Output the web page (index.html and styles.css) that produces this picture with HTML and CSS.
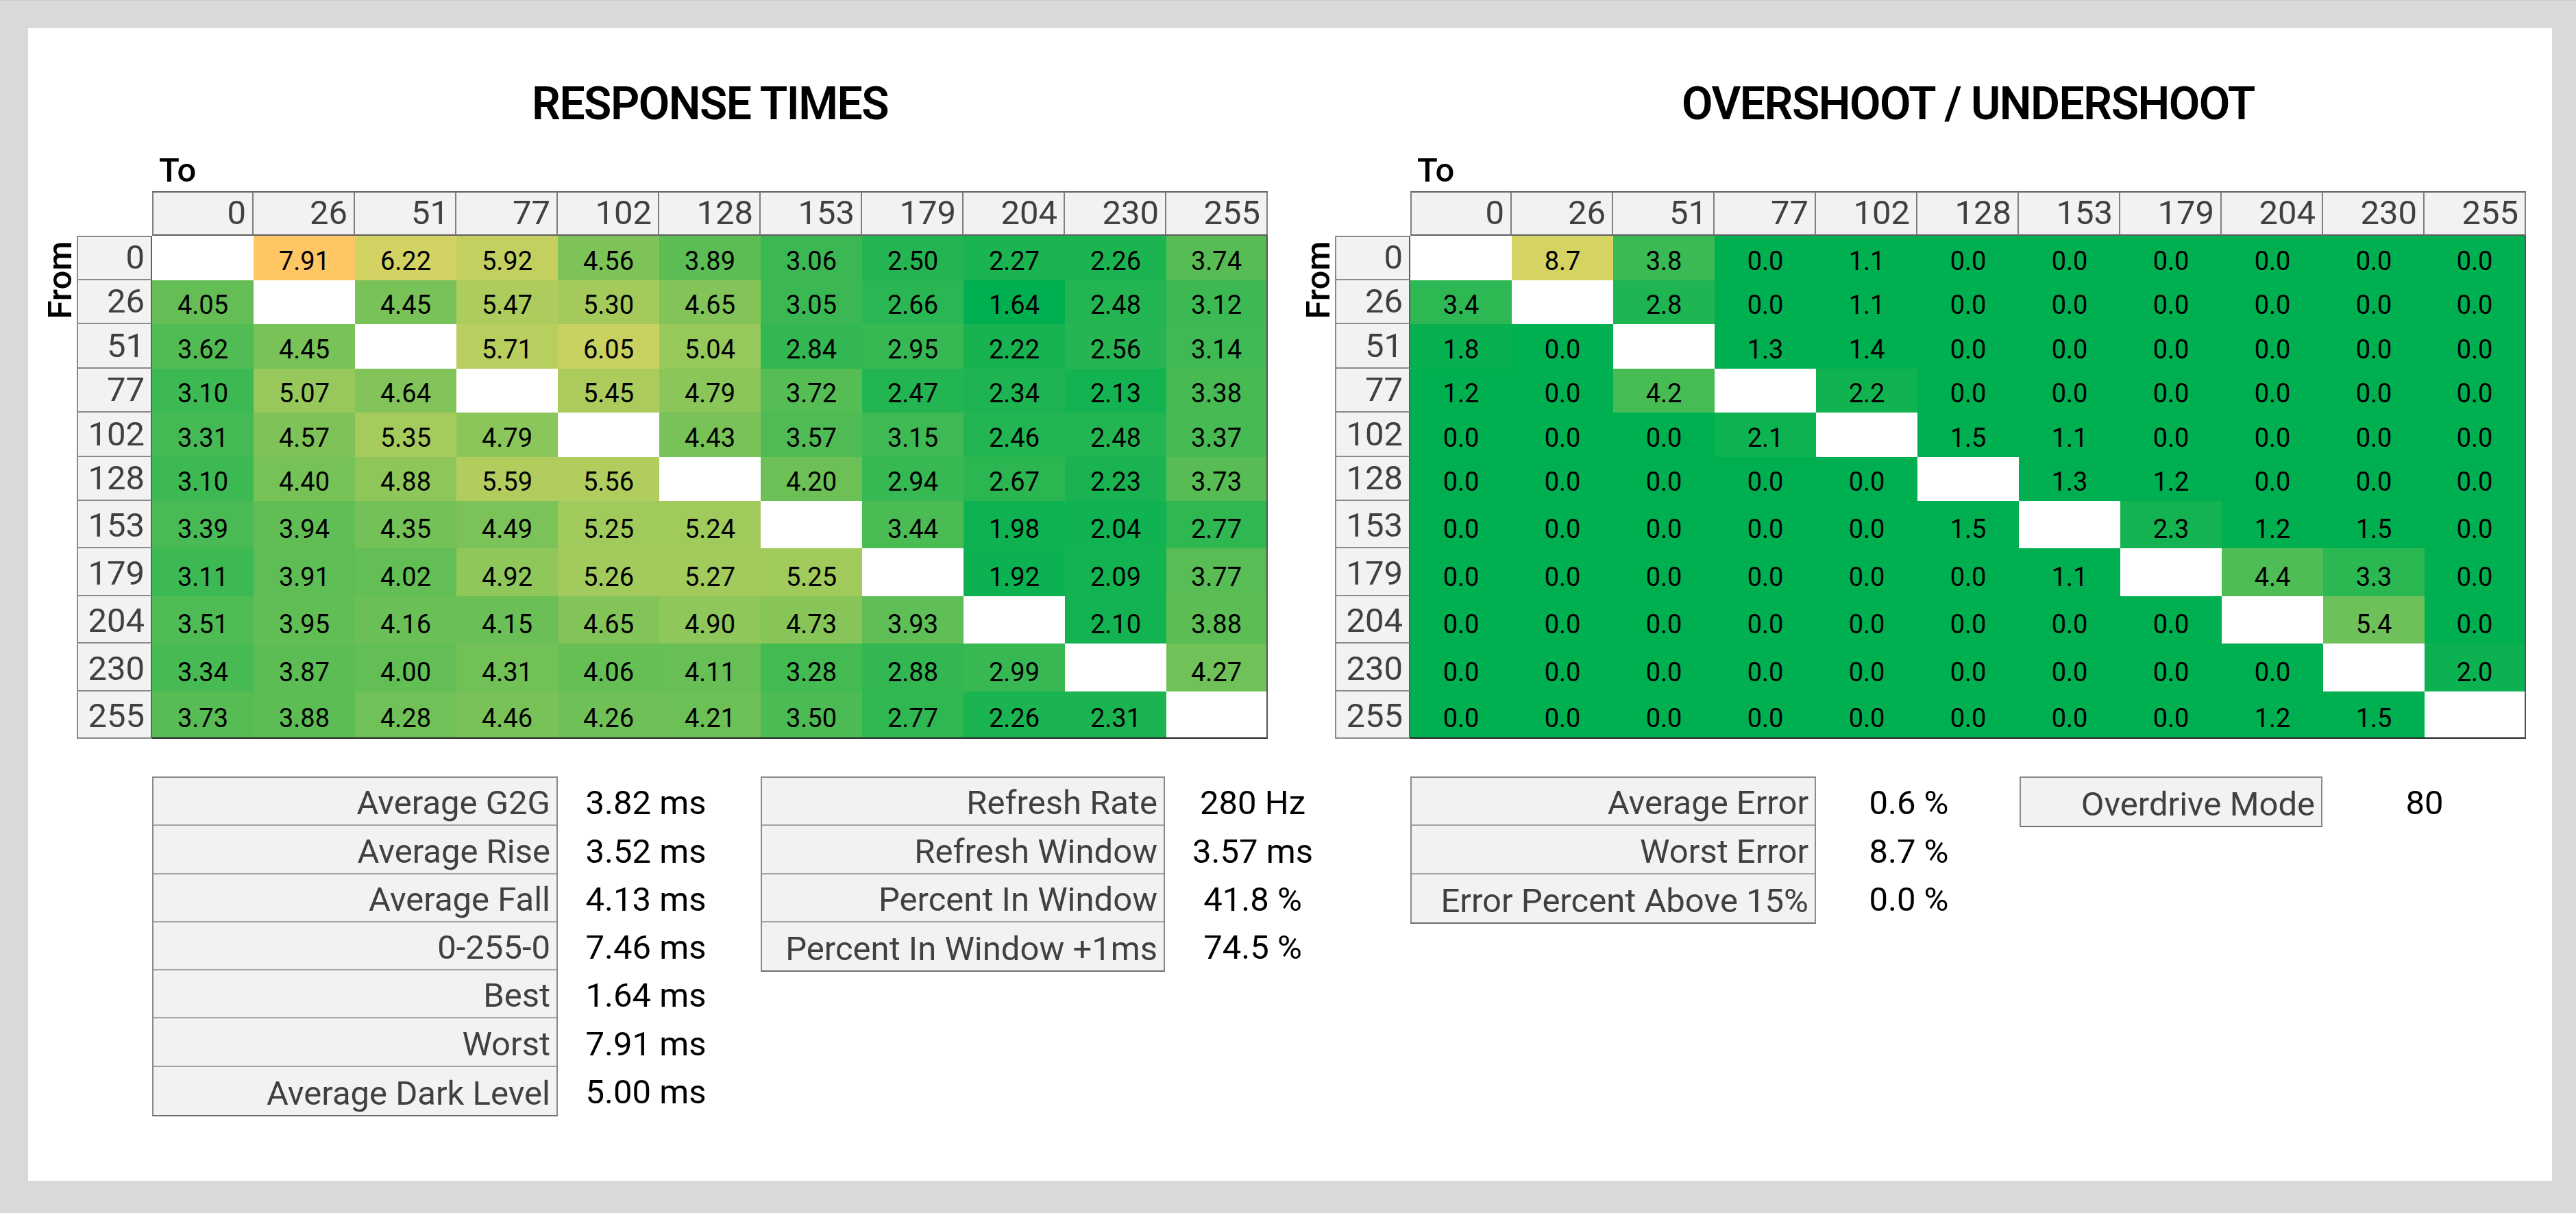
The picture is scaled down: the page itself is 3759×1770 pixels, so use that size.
FILE: index.html
```html
<!DOCTYPE html>
<html lang="en">
<head>
<meta charset="utf-8">
<title>Response Times / Overshoot</title>
<link rel="stylesheet" href="styles.css">
</head>
<body>
<main class="panel">
  <section class="chart">
    <h1 class="title">RESPONSE TIMES</h1>
    <div class="to">To</div>
    <div class="matrix-wrap">
      <div class="from"><span>From</span></div>
      <div class="matrix" id="rt-matrix"></div>
    </div>
    <div class="stats stats--rt">
      <div class="labels labels--a">
        <div class="lab">Average G2G</div>
        <div class="lab">Average Rise</div>
        <div class="lab">Average Fall</div>
        <div class="lab">0-255-0</div>
        <div class="lab">Best</div>
        <div class="lab">Worst</div>
        <div class="lab">Average Dark Level</div>
      </div>
      <div class="values values--a">
        <div class="val">3.82 ms</div>
        <div class="val">3.52 ms</div>
        <div class="val">4.13 ms</div>
        <div class="val">7.46 ms</div>
        <div class="val">1.64 ms</div>
        <div class="val">7.91 ms</div>
        <div class="val">5.00 ms</div>
      </div>
      <div class="labels labels--b">
        <div class="lab">Refresh Rate</div>
        <div class="lab">Refresh Window</div>
        <div class="lab">Percent In Window</div>
        <div class="lab">Percent In Window +1ms</div>
      </div>
      <div class="values values--b">
        <div class="val">280 Hz</div>
        <div class="val">3.57 ms</div>
        <div class="val">41.8 %</div>
        <div class="val">74.5 %</div>
      </div>
    </div>
  </section>

  <section class="chart">
    <h1 class="title">OVERSHOOT / UNDERSHOOT</h1>
    <div class="to">To</div>
    <div class="matrix-wrap">
      <div class="from"><span>From</span></div>
      <div class="matrix" id="os-matrix"></div>
    </div>
    <div class="stats stats--os">
      <div class="labels labels--a">
        <div class="lab">Average Error</div>
        <div class="lab">Worst Error</div>
        <div class="lab">Error Percent Above 15%</div>
      </div>
      <div class="values values--c">
        <div class="val">0.6 %</div>
        <div class="val">8.7 %</div>
        <div class="val">0.0 %</div>
      </div>
      <div class="labels labels--d">
        <div class="lab">Overdrive Mode</div>
      </div>
      <div class="values values--d">
        <div class="val">80</div>
      </div>
    </div>
  </section>
</main>
<script src="script.js"></script>
</body>
</html>
```

FILE: styles.css
```css
* { box-sizing: border-box; }

html, body {
  margin: 0;
  padding: 0;
}

body {
  background: #d9d9d9;
  border-top: 1px solid #c6cfd8;
  font-family: "Roboto", "Liberation Sans", sans-serif;
  color: #000;
}

.panel {
  margin: 40px 35px 0 41px;
  height: 1682px;
  background: #ffffff;
  padding: 78px 0 0 21px;
  display: flex;
  gap: 48px;
}

.chart {
  width: 1788px;
  flex-shrink: 0;
}

.title {
  margin: 0 0 0 160px;
  width: 1628px;
  text-align: center;
  font-weight: 600;
  font-size: 66px;
  line-height: 66px;
  letter-spacing: -1.5px;
  color: #000;
}

.to {
  margin: 39px 0 0 170px;
  font-weight: 500;
  font-size: 49px;
  line-height: 49px;
  color: #000;
}

.matrix-wrap {
  display: flex;
  margin-top: 6px;
}

.from {
  width: 50px;
  height: 259px;
  flex-shrink: 0;
  display: flex;
  align-items: center;
  justify-content: center;
}

.from span {
  writing-mode: vertical-rl;
  transform: rotate(180deg);
  font-weight: 500;
  font-size: 49px;
  line-height: 49px;
  color: #000;
}

.matrix {
  display: grid;
  grid-template-columns: 110px repeat(11, 148px);
  grid-template-rows: 65px repeat(6, 64.5px) repeat(5, 69.4px);
}

.corner { background: transparent; }

.hcell,
.rcell {
  background: #f2f2f2;
  color: #404040;
  font-size: 49px;
  line-height: 49px;
  display: flex;
  align-items: flex-end;
  justify-content: flex-end;
  padding: 0 9px 7px 0;
}

.hcell {
  border-top: 2px solid #5f5f5f;
  border-right: 2px solid #7f7f7f;
  border-bottom: 2px solid #5f5f5f;
}

.hcell--first { border-left: 2px solid #7f7f7f; }

.rcell {
  border-left: 2px solid #8a8a8a;
  border-bottom: 2px solid #8a8a8a;
  border-right: 2px solid #5f5f5f;
}

.rcell--first { border-top: 2px solid #8a8a8a; }

.dcell {
  font-size: 38px;
  line-height: 38px;
  color: #000;
  display: flex;
  align-items: flex-end;
  justify-content: center;
  padding-bottom: 9px;
}

.dcell--blank { background: #ffffff; }
.dcell--last-col { border-right: 2px solid #555555; }
.dcell--last-row { border-bottom: 2px solid #222222; }

.stats {
  display: flex;
  align-items: flex-start;
  margin: 55px 0 0 160px;
}

.stats > * { flex-shrink: 0; }

.labels {
  border: 2px solid #8a8a8a;
  border-bottom-color: #6e6e6e;
  background: #f2f2f2;
}

.lab,
.val {
  height: 70.3px;
  font-size: 49px;
  line-height: 49px;
  display: flex;
  align-items: flex-end;
  padding-bottom: 7px;
  white-space: nowrap;
}

.lab {
  color: #404040;
  justify-content: flex-end;
  padding-right: 9px;
  border-bottom: 2px solid #a3a3a3;
}

.lab:last-child { border-bottom: none; }

.val {
  color: #000;
  justify-content: center;
}

.labels--a { width: 592px; }
.labels--b { width: 590px; margin-left: 39px; }
.labels--d { width: 442px; margin-left: 26px; }

.values--a { width: 257px; }
.values--b { width: 256px; }
.values--c { width: 271px; }
.values--d { width: 298px; }
```

FILE: script.js
```js
(function () {
  var levels = [0, 26, 51, 77, 102, 128, 153, 179, 204, 230, 255];
  var N = null;

  var rt = [
    [N, 7.91, 6.22, 5.92, 4.56, 3.89, 3.06, 2.50, 2.27, 2.26, 3.74],
    [4.05, N, 4.45, 5.47, 5.30, 4.65, 3.05, 2.66, 1.64, 2.48, 3.12],
    [3.62, 4.45, N, 5.71, 6.05, 5.04, 2.84, 2.95, 2.22, 2.56, 3.14],
    [3.10, 5.07, 4.64, N, 5.45, 4.79, 3.72, 2.47, 2.34, 2.13, 3.38],
    [3.31, 4.57, 5.35, 4.79, N, 4.43, 3.57, 3.15, 2.46, 2.48, 3.37],
    [3.10, 4.40, 4.88, 5.59, 5.56, N, 4.20, 2.94, 2.67, 2.23, 3.73],
    [3.39, 3.94, 4.35, 4.49, 5.25, 5.24, N, 3.44, 1.98, 2.04, 2.77],
    [3.11, 3.91, 4.02, 4.92, 5.26, 5.27, 5.25, N, 1.92, 2.09, 3.77],
    [3.51, 3.95, 4.16, 4.15, 4.65, 4.90, 4.73, 3.93, N, 2.10, 3.88],
    [3.34, 3.87, 4.00, 4.31, 4.06, 4.11, 3.28, 2.88, 2.99, N, 4.27],
    [3.73, 3.88, 4.28, 4.46, 4.26, 4.21, 3.50, 2.77, 2.26, 2.31, N]
  ];

  var os = [
    [N, 8.7, 3.8, 0.0, 1.1, 0.0, 0.0, 0.0, 0.0, 0.0, 0.0],
    [3.4, N, 2.8, 0.0, 1.1, 0.0, 0.0, 0.0, 0.0, 0.0, 0.0],
    [1.8, 0.0, N, 1.3, 1.4, 0.0, 0.0, 0.0, 0.0, 0.0, 0.0],
    [1.2, 0.0, 4.2, N, 2.2, 0.0, 0.0, 0.0, 0.0, 0.0, 0.0],
    [0.0, 0.0, 0.0, 2.1, N, 1.5, 1.1, 0.0, 0.0, 0.0, 0.0],
    [0.0, 0.0, 0.0, 0.0, 0.0, N, 1.3, 1.2, 0.0, 0.0, 0.0],
    [0.0, 0.0, 0.0, 0.0, 0.0, 1.5, N, 2.3, 1.2, 1.5, 0.0],
    [0.0, 0.0, 0.0, 0.0, 0.0, 0.0, 1.1, N, 4.4, 3.3, 0.0],
    [0.0, 0.0, 0.0, 0.0, 0.0, 0.0, 0.0, 0.0, N, 5.4, 0.0],
    [0.0, 0.0, 0.0, 0.0, 0.0, 0.0, 0.0, 0.0, 0.0, N, 2.0],
    [0.0, 0.0, 0.0, 0.0, 0.0, 0.0, 0.0, 0.0, 1.2, 1.5, N]
  ];

  var rtStops = [
    [1.64, [0, 176, 80]],
    [4.0, [98, 190, 85]],
    [6.3, [214, 212, 98]],
    [7.91, [255, 199, 99]]
  ];

  var osStops = [
    [1.5, [0, 176, 80]],
    [3.4, [45, 184, 83]],
    [5.4, [110, 193, 88]],
    [8.7, [213, 211, 98]]
  ];

  function colorFor(v, stops) {
    if (v <= stops[0][0]) return rgb(stops[0][1]);
    for (var i = 1; i < stops.length; i++) {
      if (v <= stops[i][0]) {
        var a = stops[i - 1], b = stops[i];
        var t = (v - a[0]) / (b[0] - a[0]);
        return rgb([0, 1, 2].map(function (k) {
          return Math.round(a[1][k] + (b[1][k] - a[1][k]) * t);
        }));
      }
    }
    return rgb(stops[stops.length - 1][1]);
  }

  function rgb(c) { return 'rgb(' + c[0] + ',' + c[1] + ',' + c[2] + ')'; }

  function div(cls, text) {
    var d = document.createElement('div');
    d.className = cls;
    if (text !== undefined) d.textContent = text;
    return d;
  }

  function build(id, data, stops, digits) {
    var el = document.getElementById(id);
    var frag = document.createDocumentFragment();
    frag.appendChild(div('corner'));
    levels.forEach(function (l, i) {
      frag.appendChild(div('hcell' + (i === 0 ? ' hcell--first' : ''), String(l)));
    });
    data.forEach(function (row, r) {
      frag.appendChild(div('rcell' + (r === 0 ? ' rcell--first' : ''), String(levels[r])));
      row.forEach(function (v, c) {
        var cls = 'dcell';
        if (c === 10) cls += ' dcell--last-col';
        if (r === 10) cls += ' dcell--last-row';
        if (v === null) {
          frag.appendChild(div(cls + ' dcell--blank'));
        } else {
          var d = div(cls, v.toFixed(digits));
          d.style.backgroundColor = colorFor(v, stops);
          frag.appendChild(d);
        }
      });
    });
    el.appendChild(frag);
  }

  build('rt-matrix', rt, rtStops, 2);
  build('os-matrix', os, osStops, 1);
})();
```
